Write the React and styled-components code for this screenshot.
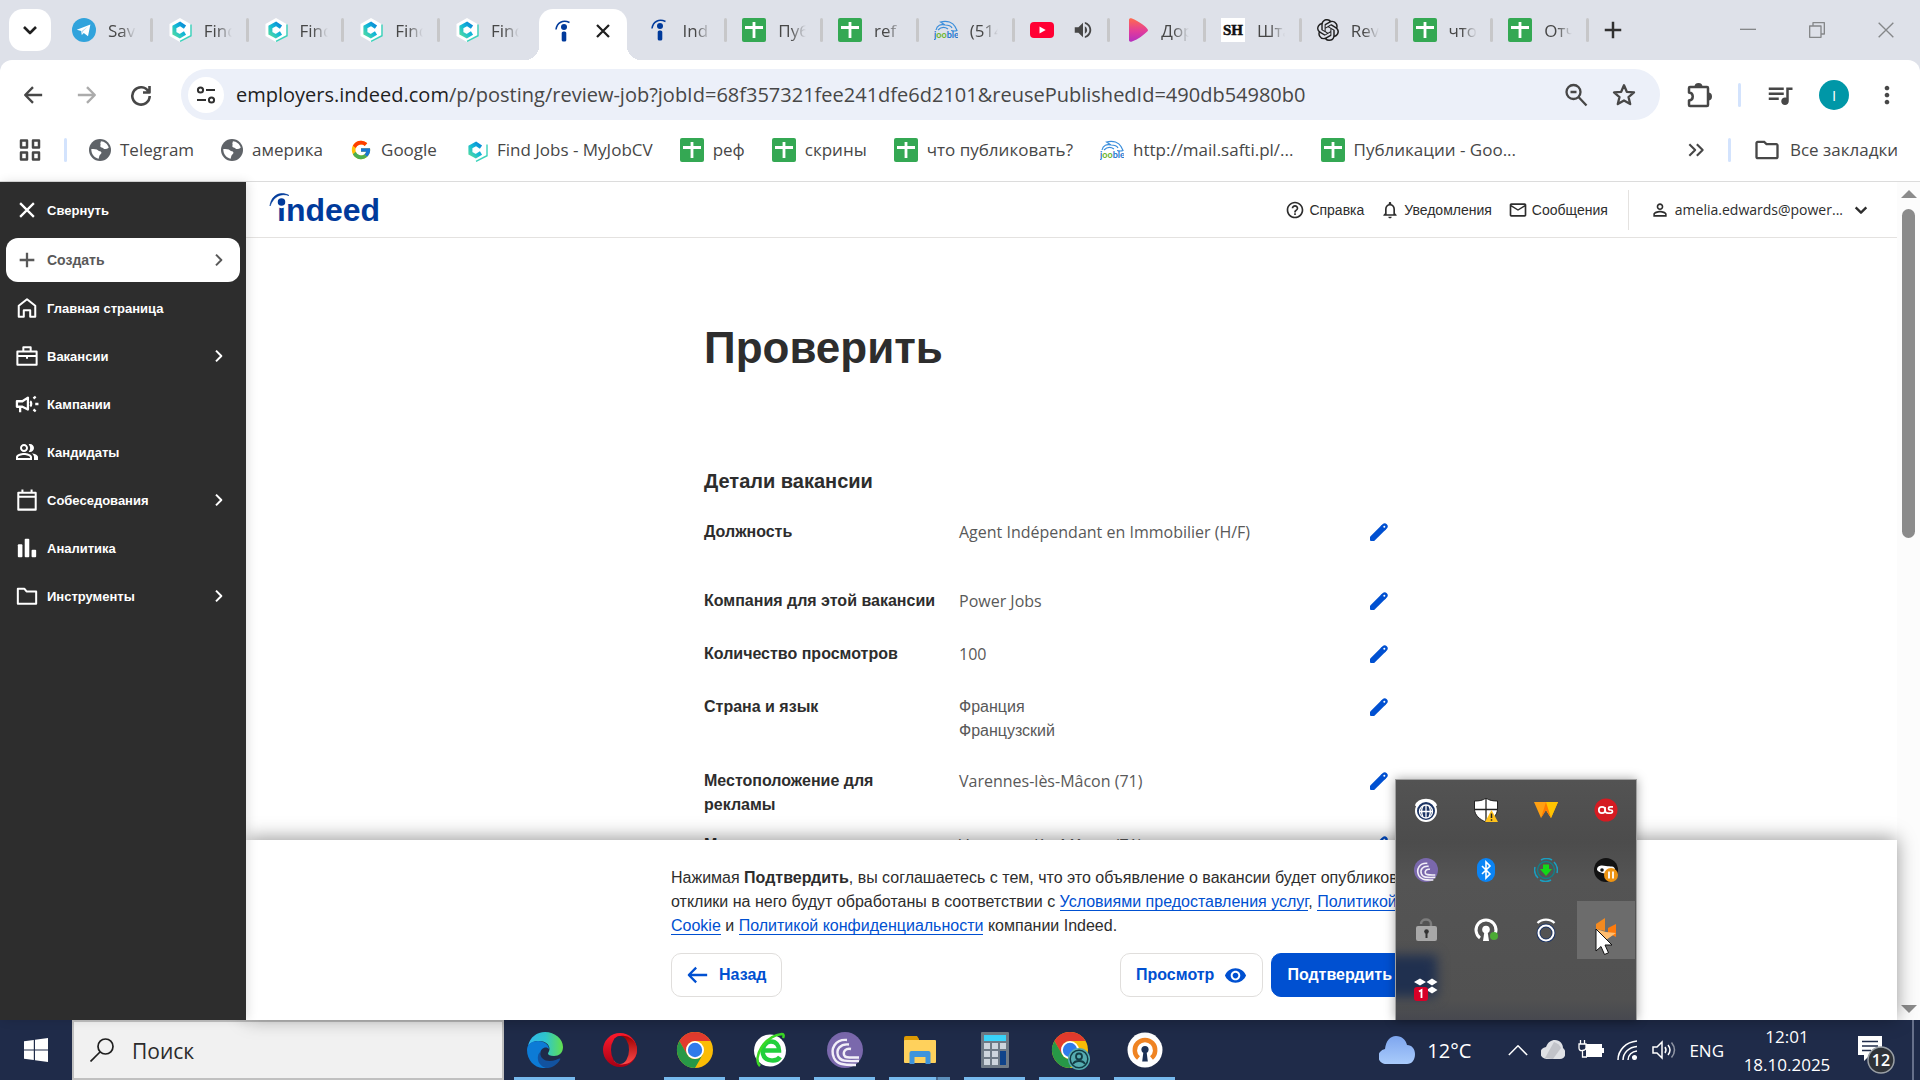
import React from 'react'
import styled, { createGlobalStyle, css } from 'styled-components'
import { FcGoogle } from 'react-icons/fc'
import { SiOpenai } from 'react-icons/si'
import {
  MdQueueMusic,
  MdMoreVert,
  MdVolumeUp,
  MdHelpOutline,
  MdOutlineNotifications,
  MdMailOutline,
  MdPersonOutline,
  MdOutlineFolder,
  MdOutlinePeopleAlt,
  MdVisibility,
} from 'react-icons/md'

const uiFont = '"Open Sans", "Noto Sans", sans-serif'
const pageFont = '"Liberation Sans", Arial, sans-serif'

const GlobalStyle = createGlobalStyle`
  * {
    box-sizing: border-box;
  }
  body {
    margin: 0;
    background: #ffffff;
    font-family: ${uiFont};
    color: #2d2d2d;
  }
  button {
    padding: 0;
    border: 0;
    background: none;
    color: inherit;
    font: inherit;
    cursor: pointer;
  }
  a {
    color: inherit;
    text-decoration: none;
  }
  svg {
    display: block;
    flex: none;
  }
`

const Desktop = styled.div`
  display: flex;
  flex-direction: column;
  height: 100vh;
  overflow: hidden;
`

/* ---------- browser: tabs ---------- */

const TabStrip = styled.div`
  display: flex;
  align-items: center;
  height: 60px;
  padding-left: 9px;
  background: #dee1e9;
`

const TabSearch = styled.button`
  display: flex;
  align-items: center;
  justify-content: center;
  width: 42px;
  height: 42px;
  margin-right: 5px;
  border-radius: 14px;
  background: #ffffff;
  color: #1f1f1f;
`

const Tabs = styled.div`
  display: grid;
  flex: 1;
  grid-auto-flow: column;
  grid-auto-columns: minmax(0, 1fr);
  height: 60px;
`

const TabButton = styled.button`
  position: relative;
  display: flex;
  align-items: center;
  gap: ${props => (props.$sound ? '18px' : '12px')};
  padding-left: 16px;
  color: #474747;
  font-size: 17px;
  text-align: left;

  ${props => props.$divided && css`
    &::after {
      content: '';
      position: absolute;
      right: -1px;
      width: 3px;
      height: 24px;
      border-radius: 2px;
      background: #c7c7c9;
    }
  `}

  ${props => props.$active && css`
    align-self: end;
    gap: 20px;
    height: 51px;
    margin: 0 4px;
    padding-bottom: 8px;
    padding-left: 12px;
    border-radius: 14px 14px 0 0;
    background: #ffffff;
    color: #1f1f1f;

    &::before,
    &::after {
      content: '';
      position: absolute;
      bottom: 0;
      width: 14px;
      height: 14px;
    }
    &::before {
      right: 100%;
      background: radial-gradient(circle at 0 0, transparent 14px, #ffffff 14px);
    }
    &::after {
      left: 100%;
      background: radial-gradient(circle at 100% 0, transparent 14px, #ffffff 14px);
    }
  `}
`

const TabTitle = styled.span`
  width: 28px;
  margin-top: 1px;
  overflow: hidden;
  line-height: 28px;
  white-space: nowrap;
  mask-image: linear-gradient(90deg, #000 45%, transparent 100%);
`

const TabTools = styled.div`
  display: flex;
  align-items: center;
  justify-content: space-between;
  width: 332px;
  padding: 0 26px 0 16px;
  color: #303030;
`

const WindowControls = styled.div`
  display: flex;
  gap: 53px;
  color: #858789;
`

const PlainButton = styled.button`
  display: flex;
  align-items: center;
  justify-content: center;
`

/* ---------- browser: toolbar ---------- */

const ToolbarShell = styled.div`
  background: #dee1e9;
`

const Toolbar = styled.div`
  display: flex;
  align-items: center;
  height: 69px;
  padding: 0 19px;
  border-radius: 12px 12px 0 0;
  background: #ffffff;
  color: #474747;
`

const NavButton = styled(PlainButton)`
  width: 28px;
  margin-right: 26px;
  opacity: ${props => (props.$faded ? 0.45 : 1)};
`

const Omnibox = styled.div`
  display: flex;
  flex: 1;
  align-items: center;
  height: 51px;
  margin-right: 26px;
  padding: 0 24px 0 7px;
  border-radius: 26px;
  background: #ecf0f9;
`

const SiteInfo = styled.button`
  display: flex;
  align-items: center;
  justify-content: center;
  width: 36px;
  height: 36px;
  border-radius: 50%;
  background: #ffffff;
`

const Address = styled.div`
  flex: 1;
  margin-left: 12px;
  overflow: hidden;
  white-space: nowrap;
  font-size: 20px;
  line-height: 32px;

  span {
    color: #1f1f1f;
  }
`

const OmniboxActions = styled.div`
  display: flex;
  gap: 24px;
`

const ToolbarActions = styled.div`
  display: flex;
  align-items: center;
  gap: 24px;
`

const Divider = styled.span`
  width: 3px;
  height: 24px;
  border-radius: 2px;
  background: #d3e3fd;
`

const Avatar = styled.span`
  display: flex;
  align-items: center;
  justify-content: center;
  width: 30px;
  height: 30px;
  border-radius: 50%;
  background: #0097a7;
  color: #ffffff;
  font-size: 15px;
`

/* ---------- browser: bookmarks ---------- */

const Bookmarks = styled.nav`
  display: flex;
  align-items: center;
  gap: 22px;
  height: 53px;
  padding: 0 22px 10px 18px;
  border-bottom: 1px solid #dcdcdc;
  background: #ffffff;
  color: #474747;
  font-size: 17px;
  white-space: nowrap;
`

const BookmarkList = styled.div`
  display: flex;
  flex: 1;
  gap: 27px;
`

const Bookmark = styled.a`
  display: flex;
  align-items: center;
  gap: 9px;
  line-height: 24px;
`

const BookmarkTail = styled.div`
  display: flex;
  align-items: center;
  gap: 22px;
`

/* ---------- page ---------- */

const Viewport = styled.div`
  position: relative;
  display: flex;
  flex: 1;
  min-height: 0;
  font-family: ${pageFont};
`

const Sidebar = styled.nav`
  z-index: 2;
  display: flex;
  flex: none;
  flex-direction: column;
  gap: 4px;
  width: 246px;
  padding: 6px;
  background: #2d2d2d;
  box-shadow: 2px 0 10px rgba(0, 0, 0, 0.12);
`

const SidebarItem = styled.a`
  display: flex;
  align-items: center;
  gap: 9px;
  height: 44px;
  padding: 0 14px 0 10px;
  border-radius: 12px;
  background: ${props => (props.$light ? '#ffffff' : 'transparent')};
  color: ${props => (props.$light ? '#595959' : '#ffffff')};
  font-size: ${props => (props.$light ? '14px' : '13px')};
  font-weight: bold;

  &:first-child {
    margin-bottom: 2px;
  }
`

const SidebarIcon = styled.span`
  display: flex;
  flex: none;
  justify-content: center;
  width: 22px;
`

const SidebarLabel = styled.span`
  flex: 1;
`

const Page = styled.div`
  display: flex;
  flex: 1;
  flex-direction: column;
  min-width: 0;
`

const PageHeader = styled.header`
  display: flex;
  flex: none;
  align-items: center;
  height: 56px;
  padding: 0 28px 0 23px;
  border-bottom: 1px solid #e4e2e0;
  font-size: 14px;
`

const LogoSlot = styled.div`
  flex: 1;
`

const Logo = styled.a`
  position: relative;
  display: inline-block;
  padding-left: 8px;
  color: #003a9b;
  font-size: 32px;
  font-weight: bold;
  line-height: 40px;

  svg {
    position: absolute;
    top: 2px;
    left: 0;
  }
`

const HeaderLink = styled.a`
  display: flex;
  align-items: center;
  gap: 4px;
  margin-left: 16px;
`

const Account = styled.button`
  display: flex;
  align-items: center;
  gap: 5px;
  height: 40px;
  margin-left: 20px;
  padding-left: 21px;
  border-left: 1px solid #e4e2e0;
  font-family: ${uiFont};
  font-size: 14px;

  svg:last-child {
    margin-left: 5px;
  }
`

const PageBody = styled.main`
  flex: 1;
  min-height: 0;
  padding: 82px 32px 0 0;
  overflow: hidden;
`

const Column = styled.div`
  max-width: ${props => props.$width}px;
  margin: 0 auto;
`

const Title = styled.h1`
  margin: 0 0 89px;
  font-size: 44px;
  line-height: 56px;
`

const Subtitle = styled.h2`
  margin: 0 0 23px;
  font-size: 20px;
  line-height: 32px;
`

const DetailRow = styled.section`
  display: grid;
  grid-template-columns: 239px 1fr 56px;
  column-gap: 16px;
  align-items: start;
  margin-bottom: ${props => props.$space}px;
  font-size: 16px;
  line-height: 24px;
`

const DetailLabel = styled.h3`
  margin: 0;
  font-size: 16px;
  font-weight: bold;
`

const DetailValue = styled.div`
  color: #595959;
  font-family: ${props => (props.$latin ? uiFont : pageFont)};
`

const EditButton = styled(PlainButton)`
  height: 24px;
  color: #0050d1;
`

const Footer = styled.footer`
  z-index: 1;
  flex: none;
  height: 180px;
  padding: 26px 32px 0 0;
  background: #ffffff;
  box-shadow: 0 -2px 18px rgba(0, 0, 0, 0.4);
  font-size: 16px;
  line-height: 24px;
`

const Terms = styled.p`
  margin: 0 -4px 15px 0;

  a {
    border-bottom: 1px solid #0050d1;
    color: #0050d1;
  }
`

const FooterActions = styled.div`
  display: flex;
  gap: 8px;
`

const ActionButton = styled.button`
  display: flex;
  align-items: center;
  gap: 10px;
  height: 44px;
  margin-right: ${props => (props.$first ? 'auto' : '0')};
  padding: 0 15px;
  border: 1px solid ${props => (props.$primary ? '#0050d1' : '#e0dedc')};
  border-radius: 10px;
  background: ${props => (props.$primary ? '#0050d1' : '#ffffff')};
  color: ${props => (props.$primary ? '#ffffff' : '#0050d1')};
  font-weight: bold;
`

const ScrollTrack = styled.div`
  display: flex;
  flex: none;
  flex-direction: column;
  align-items: center;
  width: 23px;
  padding: 8px 0 7px;
  background: #fcfcfc;
`

const ScrollThumb = styled.div`
  width: 13px;
  height: 329px;
  margin: 11px 0 auto;
  border-radius: 7px;
  background: #8b8b8b;
`

/* ---------- tray popup ---------- */

const TrayPopup = styled.div`
  position: absolute;
  right: 283px;
  bottom: 0;
  z-index: 3;
  display: grid;
  grid-template-columns: repeat(4, 60px);
  grid-auto-rows: 60px;
  width: 242px;
  height: 241px;
  overflow: hidden;
  border: 1px solid #a0a0a0;
  border-bottom: 0;
  background: linear-gradient(#535353, #4c4c4c 62px, #545454 100px, #515151 220px, #47484f);
  box-shadow: 0 0 10px rgba(0, 0, 0, 0.35);

  /* the blue button showing through the acrylic */
  &::before {
    content: '';
    position: absolute;
    top: 175px;
    left: -16px;
    width: 57px;
    height: 42px;
    background: #20304f;
    filter: blur(6px);
  }
`

const TrayCell = styled.button`
  position: relative;
  display: flex;
  align-items: center;
  justify-content: center;
  margin: 1px;
  background: ${props => (props.$hover ? '#6c6c6c' : 'transparent')};
`

const Cursor = styled.svg`
  position: absolute;
  top: 148px;
  left: 199px;
`

/* ---------- taskbar ---------- */

const Taskbar = styled.div`
  display: flex;
  flex: none;
  align-items: center;
  height: 60px;
  background: #1f2b49;
  color: #ffffff;
`

const StartButton = styled(PlainButton)`
  width: 72px;
  height: 60px;
`

const SearchBox = styled.label`
  display: flex;
  align-items: center;
  gap: 18px;
  width: 432px;
  height: 60px;
  padding-left: 16px;
  border: 2px solid #c0c0c0;
  background: #f1f1f1;
  color: #1f1f1f;

  input {
    flex: 1;
    min-width: 0;
    padding: 2px 0 0;
    border: 0;
    outline: 0;
    background: none;
    color: #2b2b2b;
    font: 21px ${uiFont};
  }
  input::placeholder {
    color: #2b2b2b;
    opacity: 1;
  }
`

const Apps = styled.div`
  display: flex;
  flex: 1;
  gap: 14px;
  margin-left: 10px;
`

const AppButton = styled(PlainButton)`
  width: 61px;
  height: 60px;
  background: bottom / 100% 3px no-repeat;

  ${props => props.$running && css`
    background-image: linear-gradient(#76b9ed, #76b9ed);
  `}
  ${props => props.$grouped && css`
    background-image: linear-gradient(90deg, #76b9ed 47px, #46688f 47px, #46688f 49px, #5c8fbb 49px);
  `}
`

const Tray = styled.div`
  display: flex;
  align-items: center;
  gap: 13px;
  padding-right: 6px;
  font-size: 17px;
`

const Weather = styled(PlainButton)`
  gap: 12px;
  margin-right: 24px;
  font-size: 20px;
`

const Clock = styled.time`
  width: 100px;
  margin-top: 2px;
  font-size: 17px;
  line-height: 28px;
  text-align: center;
`

const Notifications = styled(PlainButton)`
  height: 60px;
  padding-right: 14px;
  border-right: 2px solid #66708a;
`

/* ---------- icons ---------- */

const Stroke = ({ d, size = 24, width = 2, cap = 'butt' }) => (
  <svg width={size} height={size} viewBox="0 0 24 24" fill="none" stroke="currentColor" strokeWidth={width} strokeLinecap={cap} strokeLinejoin="round">
    <path d={d} />
  </svg>
)

const SheetIcon = () => (
  <svg width="24" height="24" viewBox="0 0 24 24">
    <rect width="24" height="24" rx="2" fill="#34a853" />
    <path d="M12 4v16M3 9.5h18" stroke="#fff" strokeWidth="2.8" fill="none" />
  </svg>
)

const TelegramIcon = () => (
  <svg width="24" height="24" viewBox="0 0 24 24">
    <circle cx="12" cy="12" r="12" fill="#31a3dc" />
    <path d="M4.8 11.8 18.4 6.5 16 18.2l-4.2-3.1-2 2-.6-4.1z" fill="#fff" />
    <path d="m9.6 13 6.2-4.4-5 5.2-.9 2.8z" fill="#b5d8ec" />
  </svg>
)

const GlobeIcon = () => (
  <svg width="22" height="22" viewBox="0 0 24 24">
    <circle cx="12" cy="12" r="12" fill="#5f6368" />
    <path d="M13 2.5c4 .3 7.5 3 8.5 7-2 1.5-4.5 2-6 .5-1-1-2.5-.5-3-1.5s.5-2 0-3 .5-2 .5-3z" fill="#fff" />
    <path d="M2.5 11c3 0 6 0 7.5 1.5 1 1 3 .5 3.5 2s-1.5 2.5-2 3.500-.5 2-1 3.500C6 20.500 2.500 17 2.500 11z" fill="#fff" />
  </svg>
)

const CvIcon = () => (
  <svg width="24" height="24" viewBox="0 0 24 24">
    <defs>
      <linearGradient id="cv" x1="1" y1="0" x2="0" y2="1">
        <stop offset="0" stopColor="#0a86d8" />
        <stop offset=".5" stopColor="#12b9d6" />
        <stop offset="1" stopColor="#4fd9a5" />
      </linearGradient>
    </defs>
    <path d="M12 0 22.5 6v12L12 24 1.5 18V6z" fill="#fff" />
    <path d="M17 9.2 12 5.9 6.4 8.9v6.4l5.4 2.9 5.2-3.2" fill="none" stroke="url(#cv)" strokeWidth="4" />
    <path d="M23 6.5v11.2L12 23.3" fill="none" stroke="#3ad2ba" strokeWidth="1.4" />
  </svg>
)

const IndeedIcon = () => (
  <svg width="24" height="24" viewBox="0 0 24 24" fill="#003a9b">
    <circle cx="13" cy="8" r="3" />
    <rect x="10.7" y="12.5" width="4.6" height="10" rx="1.6" />
    <path d="M5 10.5C6 3.5 12 .5 18.5 3.5" fill="none" stroke="#003a9b" strokeWidth="1.5" />
  </svg>
)

const JoobleIcon = () => (
  <svg width="24" height="24" viewBox="0 0 24 24">
    <path d="M2 12C3 7 7 6 11 7L6.5 4C13 2 19 4.5 21 8.5l2 4c-2 1-4 .5-6 0M11 7c3 0 6 1 7 3M4 12c3-3 7-3 10-1" fill="none" stroke="#3b8edb" strokeWidth="1.2" />
    <text x="0" y="20" fontSize="9" fontWeight="bold" fontFamily="Lato, sans-serif" fill="#1d76cf">j<tspan fill="#6cb52d">oo</tspan>ble</text>
  </svg>
)

const YoutubeIcon = () => (
  <svg width="24" height="24" viewBox="0 0 24 24">
    <rect y="4" width="24" height="16" rx="4" fill="#ff0033" />
    <path d="m9.5 8.6 6.2 3.4-6.2 3.4z" fill="#fff" />
  </svg>
)

const PlayIcon = () => (
  <svg width="24" height="24" viewBox="0 0 24 24">
    <defs>
      <linearGradient id="play" x1="0" y1="0" x2="0" y2="1">
        <stop offset="0" stopColor="#ff6a4e" />
        <stop offset=".55" stopColor="#e23c9a" />
        <stop offset="1" stopColor="#b52fc0" />
      </linearGradient>
    </defs>
    <path d="M4 2C4 .3 5.5 0 7 .6c6.5 2.6 12 6.6 15 9.8 1.3 1.3 1.3 2.3 0 3.4-3.5 3.3-8.5 7.5-15 9.7-2 .6-3 0-3-1.5z" fill="url(#play)" />
  </svg>
)

const ShIcon = () => (
  <svg width="24" height="24" viewBox="0 0 24 24">
    <rect width="24" height="24" fill="#fff" />
    <text x="12" y="17" fontSize="15" fontWeight="bold" fontFamily="Liberation Serif, serif" textAnchor="middle" fill="#111" stroke="#111" strokeWidth=".5">SH</text>
  </svg>
)

const PuzzleIcon = () => (
  <svg width="28" height="28" viewBox="0 0 28 28">
    <path d="M4 6h17q1 0 1 1v17q0 1-1 1H4q-1 0-1-1v-4.500c5-.5 5-7.500 0-8V7q0-1 1-1z" fill="none" stroke="currentColor" strokeWidth="2.5" strokeLinejoin="round" />
    <path d="M8.5 6a4 4 0 0 1 8 0zM22 11.5a4 4 0 0 1 0 8z" fill="currentColor" />
  </svg>
)

const PencilIcon = () => (
  <svg width="20" height="20" viewBox="0 0 20 20">
    <path d="M1 14.8 12.5 3.2l4.3 4.3L5.2 19H2q-1 0-1-1z" fill="currentColor" />
    <path d="m11.5 4.2 2-2q2.3-2 4.3 0t0 4.3l-2 2z" fill="currentColor" />
    <circle cx="15.3" cy="4.7" r="1" fill="#fff" />
  </svg>
)

const Chevron = () => <Stroke size={16} width={3} d="m9 4 8 8-8 8" />

const HomeIcon = () => <Stroke size={22} width={2.2} d="M3 9.5 12 2.5l9 7V21.5h-5.5v-7h-7v7H3z" />
const CaseIcon = () => <Stroke size={22} width={2.2} d="M1.5 7h21v14.5h-21zM8 7V2.5h8V7M1.5 12h21M12 12v3" />
const HornIcon = () => (
  <svg width="24" height="22" viewBox="0 0 26 24" fill="none" stroke="currentColor" strokeWidth="2.5" strokeLinejoin="round">
    <path d="M2 9h6l6-4v13l-6-3H2zM5.5 15v6M16.5 9c1.500 1 1.500 4.500 0 5.500M20 6l2.500-2M22 12h3.500M20 18l2.500 2" />
  </svg>
)
const CalendarIcon = () => <Stroke size={22} width={2.2} d="M2.5 4h19v18.5h-19zM2.5 8.5h19M7 .5V4M17 .5V4" />
const ChartIcon = () => (
  <svg width="22" height="22" viewBox="0 0 24 24" fill="currentColor">
    <rect x="2" y="8" width="5" height="14" rx="1" />
    <rect x="9.5" y="2" width="5" height="20" rx="1" />
    <rect x="17" y="14" width="5" height="8" rx="1" />
  </svg>
)

const ChromeIcon = ({ profile }) => (
  <svg width="40" height="40" viewBox="0 0 40 40">
    <circle cx="20" cy="20" r="18" fill="#fbbc05" />
    <path d="M4.4 11A18 18 0 0 1 35.6 11H20a9 9 0 0 0-7.8 4.5l-.2 9z" fill="#e33b2e" />
    <path d="M4.4 11A18 18 0 0 0 20 38l7.8-13.5A9 9 0 0 1 12.2 24.5z" fill="#279847" />
    <circle cx="20" cy="20" r="9" fill="#fff" />
    <circle cx="20" cy="20" r="7.2" fill="#2f7bea" />
    {profile && (
      <g>
        <circle cx="29" cy="29" r="11" fill="#55acb0" />
        <circle cx="29" cy="29" r="8.8" fill="none" stroke="#123c44" strokeWidth="1.5" />
        <circle cx="29" cy="26.5" r="3" fill="none" stroke="#123c44" strokeWidth="1.8" />
        <path d="M23 34c2-4 10-4 12 0" fill="none" stroke="#123c44" strokeWidth="1.8" />
      </g>
    )}
  </svg>
)

const EdgeIcon = () => (
  <svg width="36" height="36" viewBox="0 0 36 36">
    <defs>
      <linearGradient id="edge" x1="0" x2="1">
        <stop offset="0" stopColor="#31b9ee" />
        <stop offset=".5" stopColor="#2fc6cf" />
        <stop offset="1" stopColor="#62e04d" />
      </linearGradient>
    </defs>
    <path d="M1 14C3 5 10 0 18 0c10 0 18 7 18 15 0 6-4 9-9 9-4 0-6-1-6-2.5 0-1 1.5-2 1.5-4.5C22.5 12 18 9 12 9 7 9 3 11 1 14z" fill="url(#edge)" />
    <path d="M0 18c0-6 5-9 11-9 6.5 0 11 4 11 8-2-3-9-2-9 6 0 6 5 10 9 12-10 4-22-4-22-17z" fill="#0c7bd6" />
    <path d="M13.5 20c-1 5 3 9 9 9 5 0 8-2 10-2.5 1 0 1 .5.5 1.2C30 33 24 36.5 19 36c-6-2-9-7-8-12 .3-2 1.3-3.5 2.5-4z" fill="#12529f" />
  </svg>
)

const OperaIcon = () => (
  <svg width="36" height="36" viewBox="0 0 36 36">
    <defs>
      <linearGradient id="opera" x1="0" y1="0" x2="0" y2="1">
        <stop offset="0" stopColor="#ff1b2d" />
        <stop offset="1" stopColor="#a70014" />
      </linearGradient>
      <linearGradient id="operaSide" x1="0" y1="0" x2="0" y2="1">
        <stop offset="0" stopColor="#9c0000" />
        <stop offset="1" stopColor="#ff4b4b" />
      </linearGradient>
    </defs>
    <circle cx="18" cy="18" r="17" fill="url(#opera)" />
    <path d="M12 7c3-3 7-4 11-3 7 1 12 7 12 14s-5 13-12 14c-4 1-8 0-11-3z" fill="url(#operaSide)" />
    <ellipse cx="18" cy="18" rx="9" ry="14" fill="#1f2b49" />
  </svg>
)

const GreenBrowserIcon = () => (
  <svg width="36" height="36" viewBox="0 0 36 36">
    <circle cx="18" cy="18.5" r="16" fill="#fff" />
    <path d="M28 25c-3 5-15 5-17-3-2-8 4-12.500 8-12.500 5 0 8 4 8 9H12" fill="none" stroke="#22cf3c" strokeWidth="4.5" />
    <path d="M8 34C0 26 12 4 30 2c2 0 2 2 1 4" fill="none" stroke="#3bd925" strokeWidth="2.5" />
  </svg>
)

const TorrentIcon = ({ size = 36 }) => (
  <svg width={size} height={size} viewBox="0 0 36 36">
    <circle cx="18" cy="18" r="18" fill="#7a68ac" />
    <path d="M20 8C8 7 3 17 7 26c3 6 8 7 22 7M22 12.5c-9-1-13 5-11 11 2 6 8 6 21 5.500M24 17c-5-1-8 2-7 6 1 3 5 2.500 15 2.500" fill="none" stroke="#f2eff8" strokeWidth="2.4" />
  </svg>
)

const FolderIcon = () => (
  <svg width="34" height="32" viewBox="0 0 34 32">
    <path d="M1 4q0-2 2-2h11l2 3v5H1z" fill="#dd9a04" />
    <rect x="1" y="6" width="32" height="23" rx="1" fill="#ffd15c" />
    <path d="M6.5 30V19q0-2 2-2h17q2 0 2 2v11h-5v-7h-11v7z" fill="#3f94dc" />
  </svg>
)

const CalcIcon = () => (
  <svg width="28" height="36" viewBox="0 0 28 36">
    <rect width="28" height="36" rx="1" fill="#6f7a86" />
    <rect x="3" y="3" width="22" height="6" fill="#3ad4fb" />
    <path d="M3 11h6v6H3zM11 11h6v6h-6zM19 11h6v6h-6zM3 19h6v6H3zM11 19h6v6h-6zM3 27h6v6H3zM11 27h6v6h-6z" fill="#ced5dd" />
    <rect x="19" y="19" width="6" height="14" fill="#10438a" />
  </svg>
)

const VpnIcon = () => (
  <svg width="36" height="36" viewBox="0 0 36 36">
    <circle cx="18" cy="18" r="17.5" fill="#fff" />
    <path d="M11.5 26A10.2 10.2 0 1 1 24.5 26" fill="none" stroke="#ef8322" strokeWidth="4.5" />
    <circle cx="18" cy="17.5" r="3.6" fill="#1c3156" />
    <path d="M16.5 19h3l1.3 10.5h-5.600z" fill="#1c3156" />
  </svg>
)

const GlobeTray = () => (
  <svg width="24" height="24" viewBox="0 0 24 24" fill="none" stroke="#fff" strokeWidth="1.3">
    <circle cx="12" cy="13" r="10" fill="#1d3565" strokeWidth="2" />
    <path d="M2 8C5 0 19 0 22 8" strokeWidth="2.5" />
    <circle cx="12" cy="13.5" r="6.5" />
    <path d="M12 7v13M5.5 13.5h13M9 8c-2 4-2 7 0 11M15 8c2 4 2 7 0 11" />
  </svg>
)

const ShieldTray = () => (
  <svg width="24" height="24" viewBox="0 0 24 24">
    <path d="M12 0c3 2.5 7 3 11.5 3v8c0 6-5 10.5-11.5 13C5.5 21.5.5 17 .5 11V3C5 3 9 2.5 12 0z" fill="#fff" stroke="#222" />
    <path d="M12 0v24M1 11.5h22" stroke="#222" strokeWidth="1.3" />
    <path d="m17.5 12 6.5 12H11z" fill="#ffc21a" />
    <path d="M17.5 15.5v4.5M17.5 21.3v1.5" stroke="#222" strokeWidth="1.5" />
  </svg>
)

const FoxTray = () => (
  <svg width="24" height="24" viewBox="0 0 24 24">
    <path d="M0 4h24l-7 16-5-8-5 8z" fill="#ffa012" />
    <path d="M12 4h12l-7 16-5-8z" fill="#ffc400" />
    <path d="m12 4 5 16-5-8-5 8z" fill="#ff7900" />
  </svg>
)

const LastTray = () => (
  <svg width="24" height="24" viewBox="0 0 24 24">
    <circle cx="12" cy="12" r="11.5" fill="#d51b22" />
    <circle cx="8" cy="12" r="3.2" fill="none" stroke="#fff" strokeWidth="1.7" />
    <path d="M11 9v3c0 2 1 3.2 3 3.2h2.5c2.6 0 2.6-3.2 0-3.2s-2.6-3.2 0-3.2H19" fill="none" stroke="#fff" strokeWidth="1.7" />
  </svg>
)

const BluetoothTray = () => (
  <svg width="24" height="24" viewBox="0 0 24 24">
    <rect x="3" width="18" height="24" rx="9" fill="#0a84f5" />
    <path d="m8 8 8 8-4 4V4l4 4-8 8" fill="none" stroke="#fff" strokeWidth="1.6" />
  </svg>
)

const DownloadTray = () => (
  <svg width="24" height="24" viewBox="0 0 24 24" fill="none" stroke="#1a9ec0" strokeWidth="1.5">
    <path d="M4 20A11.5 11.5 0 0 1 1 9M20 4a11.5 11.5 0 0 1 3 11M7 2a11 11 0 0 1 11 0M17 22a11 11 0 0 1-11 0" />
    <circle cx="12" cy="12" r="8.5" stroke="#157d85" />
    <path d="M9 6.5h6V11h3l-6 7-6-7h3z" fill="#12d916" stroke="none" />
  </svg>
)

const NinjaTray = () => (
  <svg width="24" height="24" viewBox="0 0 24 24">
    <circle cx="12" cy="12" r="12" fill="#121212" />
    <path d="M3 12c0-5 5-5 9-4s9-1 9 4-14 5-18 0z" fill="#fff" />
    <circle cx="8" cy="12" r="1.8" fill="#121212" />
    <circle cx="17" cy="17" r="7" fill="#ee9412" />
    <path d="M15 13.5v7M19 13.5v7" stroke="#fff" strokeWidth="1.8" />
  </svg>
)

const LockTray = () => (
  <svg width="24" height="24" viewBox="0 0 24 24">
    <path d="M7 6c0-6 10-6 10 0v6" fill="none" stroke="#7d7d7d" strokeWidth="2.5" />
    <rect x="2" y="8" width="21" height="15" rx="2" fill="#a8a8a8" />
    <circle cx="12.5" cy="13.5" r="2.3" fill="#333" />
    <path d="M12.5 14v6" stroke="#333" strokeWidth="2" />
  </svg>
)

const VpnTray = () => (
  <svg width="24" height="24" viewBox="0 0 24 24">
    <path d="M6 20A10 10 0 1 1 18 20" fill="none" stroke="#fff" strokeWidth="3" />
    <circle cx="12" cy="11.5" r="3.8" fill="#fff" />
    <path d="M10.5 13h3l1.5 10H9z" fill="#fff" />
    <circle cx="20" cy="18" r="4" fill="#4cab35" />
  </svg>
)

const CircleTray = () => (
  <svg width="24" height="24" viewBox="0 0 24 24" fill="none">
    <circle cx="12" cy="15" r="7.5" stroke="#1d3565" strokeWidth="4" />
    <circle cx="12" cy="15" r="7.5" stroke="#fff" strokeWidth="2" />
    <path d="M3.5 5C8 .5 16 .5 20.5 5" stroke="#fff" strokeWidth="2.2" />
  </svg>
)

const OrangeTray = () => (
  <svg width="24" height="24" viewBox="0 0 24 24">
    <path d="M2 6 11 0v13l-9-2z" fill="#f58a1f" />
    <path d="m14 10 8-4v13l-8-4z" fill="#ff7b0c" />
    <path d="M2 11 12 14l10 1-10 7z" fill="#ffbd70" />
  </svg>
)

const DropboxTray = () => (
  <svg width="24" height="24" viewBox="0 0 24 24">
    <path d="m0 4 6-3.5L12 4 6 7.5zM12.5 4l5.5-3.5L23.5 4 18 7.5zM12.5 12 18 8.500l5.500 3.500-5.500 3.500z" fill="#fff" />
    <rect y="9" width="14" height="14" rx="3" fill="#d80027" />
    <path d="m5 13.5 2.5-1.5v8" stroke="#fff" strokeWidth="1.8" fill="none" />
  </svg>
)

const ScrollArrow = ({ down }) => (
  <svg width="16" height="8" viewBox="0 0 16 8">
    <path d={down ? 'M0 0h16L8 8z' : 'M0 8h16L8 0z'} fill="#8b8b8b" />
  </svg>
)

/* ---------- data ---------- */

const tabs = [
  { icon: <TelegramIcon />, title: 'Save', divided: true },
  { icon: <CvIcon />, title: 'Find', divided: true },
  { icon: <CvIcon />, title: 'Find', divided: true },
  { icon: <CvIcon />, title: 'Find', divided: true },
  { icon: <CvIcon />, title: 'Find' },
  { icon: <IndeedIcon />, active: true },
  { icon: <IndeedIcon />, title: 'Ind', divided: true },
  { icon: <SheetIcon />, title: 'Пуб', divided: true },
  { icon: <SheetIcon />, title: 'ref', divided: true },
  { icon: <JoobleIcon />, title: '(514', divided: true },
  { icon: <YoutubeIcon />, sound: true, divided: true },
  { icon: <PlayIcon />, title: 'Дор', divided: true },
  { icon: <ShIcon />, title: 'Шта', divided: true },
  { icon: <SiOpenai size={22} color="#1f1f1f" />, title: 'Rev', divided: true },
  { icon: <SheetIcon />, title: 'что', divided: true },
  { icon: <SheetIcon />, title: 'Отч', divided: true },
]

const bookmarks = [
  { icon: <GlobeIcon />, title: 'Telegram' },
  { icon: <GlobeIcon />, title: 'америка' },
  { icon: <FcGoogle size={22} />, title: 'Google' },
  { icon: <CvIcon />, title: 'Find Jobs - MyJobCV' },
  { icon: <SheetIcon />, title: 'реф' },
  { icon: <SheetIcon />, title: 'скрины' },
  { icon: <SheetIcon />, title: 'что публиковать?' },
  { icon: <JoobleIcon />, title: 'http://mail.safti.pl/...' },
  { icon: <SheetIcon />, title: 'Публикации - Goo...' },
]

const menu = [
  { icon: <Stroke size={22} width={2.5} d="m4.5 4.5 15 15M19.5 4.5l-15 15" />, title: 'Свернуть' },
  { icon: <Stroke size={22} width={2.5} d="M12 4v16M4 12h16" />, title: 'Создать', light: true, more: true },
  { icon: <HomeIcon />, title: 'Главная страница' },
  { icon: <CaseIcon />, title: 'Вакансии', more: true },
  { icon: <HornIcon />, title: 'Кампании' },
  { icon: <MdOutlinePeopleAlt size={24} />, title: 'Кандидаты' },
  { icon: <CalendarIcon />, title: 'Собеседования', more: true },
  { icon: <ChartIcon />, title: 'Аналитика' },
  { icon: <Stroke size={22} width={2.2} d="M2 4h7l2.5 3H22v13.5H2z" />, title: 'Инструменты', more: true },
]

const details = [
  { label: 'Должность', lines: ['Agent Indépendant en Immobilier (H/F)'], latin: true, space: 45 },
  { label: 'Компания для этой вакансии', lines: ['Power Jobs'], latin: true, space: 29 },
  { label: 'Количество просмотров', lines: ['100'], latin: true, space: 29 },
  { label: 'Страна и язык', lines: ['Франция', 'Французский'], space: 26 },
  { label: 'Местоположение для рекламы', lines: ['Varennes-lès-Mâcon (71)'], latin: true, space: 16 },
  { label: 'Местоположение', lines: ['Varennes-lès-Mâcon (71)'], latin: true, space: 16 },
]

const trayIcons = [
  { name: 'Globe', icon: <GlobeTray /> },
  { name: 'Security', icon: <ShieldTray /> },
  { name: 'Fox', icon: <FoxTray /> },
  { name: 'Scrobbler', icon: <LastTray /> },
  { name: 'Torrent', icon: <TorrentIcon size={24} /> },
  { name: 'Bluetooth', icon: <BluetoothTray /> },
  { name: 'Download', icon: <DownloadTray /> },
  { name: 'Ninja', icon: <NinjaTray /> },
  { name: 'Lock', icon: <LockTray /> },
  { name: 'VPN', icon: <VpnTray /> },
  { name: 'Circle', icon: <CircleTray /> },
  { name: 'Orange', icon: <OrangeTray />, hover: true },
  { name: 'Dropbox', icon: <DropboxTray /> },
]

const apps = [
  { name: 'Edge', icon: <EdgeIcon />, running: true },
  { name: 'Opera', icon: <OperaIcon /> },
  { name: 'Chrome', icon: <ChromeIcon />, running: true },
  { name: 'Browser', icon: <GreenBrowserIcon />, running: true },
  { name: 'Torrent', icon: <TorrentIcon />, running: true },
  { name: 'Explorer', icon: <FolderIcon />, running: true, grouped: true },
  { name: 'Calculator', icon: <CalcIcon />, running: true },
  { name: 'Chrome profile', icon: <ChromeIcon profile />, running: true },
  { name: 'VPN', icon: <VpnIcon />, running: true },
]

/* ---------- parts ---------- */

const Tab = ({ icon, title, active, sound, divided }) => (
  <TabButton $active={active} $divided={divided} $sound={sound}>
    {icon}
    {title && <TabTitle>{title}</TabTitle>}
    {active && <Stroke size={16} width={3.4} d="m3 3 18 18M21 3 3 21" />}
    {sound && <MdVolumeUp size={22} />}
  </TabButton>
)

const Browser = () => (
  <header>
    <TabStrip>
      <TabSearch aria-label="Поиск вкладок"><Stroke size={18} width={3.5} d="m4 8 8 8 8-8" /></TabSearch>
      <Tabs>
        {tabs.map((tab, i) => <Tab key={i} {...tab} />)}
      </Tabs>
      <TabTools>
        <PlainButton aria-label="Новая вкладка"><Stroke size={18} width={3.3} d="M12 1v22M1 12h22" /></PlainButton>
        <WindowControls>
          <PlainButton aria-label="Свернуть окно"><Stroke size={16} d="M0 11h24" /></PlainButton>
          <PlainButton aria-label="Окно"><Stroke size={16} d="M1 6h17v17H1zM6 6V1h17v17h-5" /></PlainButton>
          <PlainButton aria-label="Закрыть"><Stroke size={16} d="m1 1 22 22M23 1 1 23" /></PlainButton>
        </WindowControls>
      </TabTools>
    </TabStrip>
    <ToolbarShell>
      <Toolbar>
        <NavButton aria-label="Назад"><Stroke size={22} width={2.6} d="M22 12H4M12 3.5 3.5 12l8.5 8.5" /></NavButton>
        <NavButton aria-label="Вперёд" $faded><Stroke size={22} width={2.6} d="M2 12H20M12 3.5l8.5 8.5-8.5 8.5" /></NavButton>
        <NavButton aria-label="Обновить"><Stroke width={2.6} d="M19.5 8.5A8.7 8.7 0 1 0 20.7 13M20.5 3v6.5H14" /></NavButton>
        <Omnibox>
          <SiteInfo aria-label="Сведения о сайте">
            <svg width="20" height="20" viewBox="0 0 20 20" fill="none" stroke="#303030" strokeWidth="2">
              <circle cx="4.5" cy="5" r="2.6" />
              <circle cx="15.5" cy="15" r="2.6" />
              <path d="M10 5h9M1 15h9" />
            </svg>
          </SiteInfo>
          <Address><span>employers.indeed.com</span>/p/posting/review-job?jobId=68f357321fee241dfe6d2101&reusePublishedId=490db54980b0</Address>
          <OmniboxActions>
            <PlainButton aria-label="Масштаб">
              <svg width="24" height="24" viewBox="0 0 24 24" fill="none" stroke="currentColor" strokeWidth="2.3">
                <circle cx="9.5" cy="9" r="7" />
                <path d="m14.5 14 8 8.500M6.500 9h6" />
              </svg>
            </PlainButton>
            <PlainButton aria-label="В закладки">
              <Stroke size={24} width={2.3} d="m12 2.2 2.8 6.6 7.2.6-5.5 4.7 1.7 7L12 17.4l-6.2 3.700 1.700-7L2 9.400l7.200-.6z" />
            </PlainButton>
          </OmniboxActions>
        </Omnibox>
        <ToolbarActions>
          <PlainButton aria-label="Расширения"><PuzzleIcon /></PlainButton>
          <Divider />
          <PlainButton aria-label="Медиа"><MdQueueMusic size={30} /></PlainButton>
          <Avatar>I</Avatar>
          <PlainButton aria-label="Меню"><MdMoreVert size={28} /></PlainButton>
        </ToolbarActions>
      </Toolbar>
    </ToolbarShell>
    <Bookmarks>
      <Stroke size={24} width={2.5} d="M3 2.5h6v7H3zM15 2.5h6v7h-6zM3 14.5h6v7H3zM15 14.5h6v7h-6z" />
      <Divider />
      <BookmarkList>
        {bookmarks.map(item => (
          <Bookmark href="#" key={item.title}>{item.icon}{item.title}</Bookmark>
        ))}
      </BookmarkList>
      <BookmarkTail>
        <Stroke size={20} width={2.5} d="m4 5 7 7-7 7M13 5l7 7-7 7" />
        <Divider />
        <Bookmark href="#"><MdOutlineFolder size={28} />Все закладки</Bookmark>
      </BookmarkTail>
    </Bookmarks>
  </header>
)

const SideMenu = () => (
  <Sidebar>
    {menu.map(item => (
      <SidebarItem href="#" key={item.title} $light={item.light}>
        <SidebarIcon>{item.icon}</SidebarIcon>
        <SidebarLabel>{item.title}</SidebarLabel>
        {item.more && <Chevron />}
      </SidebarItem>
    ))}
  </Sidebar>
)

const Review = () => (
  <PageBody>
    <Column $width={703}>
      <Title>Проверить</Title>
      <Subtitle>Детали вакансии</Subtitle>
      {details.map(row => (
        <DetailRow key={row.label} $space={row.space}>
          <DetailLabel>{row.label}</DetailLabel>
          <DetailValue $latin={row.latin}>
            {row.lines.map(line => <div key={line}>{line}</div>)}
          </DetailValue>
          <EditButton aria-label={`Изменить: ${row.label}`}><PencilIcon /></EditButton>
        </DetailRow>
      ))}
    </Column>
  </PageBody>
)

const ConfirmBar = () => (
  <Footer>
    <Column $width={769}>
      <Terms>
        Нажимая <b>Подтвердить</b>, вы соглашаетесь с тем, что это объявление о вакансии будет опубликовано и
        отклики на него будут обработаны в соответствии с <a href="#">Условиями предоставления услуг</a>, <a href="#">Политикой
        Cookie</a> и <a href="#">Политикой конфиденциальности</a> компании Indeed.
      </Terms>
      <FooterActions>
        <ActionButton $first><Stroke size={22} width={2.5} d="M22 12H3M10 4l-8 8 8 8" />Назад</ActionButton>
        <ActionButton>Просмотр<MdVisibility size={23} /></ActionButton>
        <ActionButton $primary>Подтвердить<Stroke size={22} width={2.5} d="M2 12h19M14 4l8 8-8 8" /></ActionButton>
      </FooterActions>
    </Column>
  </Footer>
)

const HiddenIcons = () => (
  <TrayPopup>
    {trayIcons.map(item => (
      <TrayCell key={item.name} aria-label={item.name} $hover={item.hover}>{item.icon}</TrayCell>
    ))}
    <Cursor width="20" height="28" viewBox="0 0 20 28">
      <path d="M1 1v22l5-4.5 3.5 8 4-1.7L10 17h7z" fill="#fff" stroke="#111" />
    </Cursor>
  </TrayPopup>
)

const SystemBar = () => (
  <Taskbar>
    <StartButton aria-label="Пуск">
      <svg width="24" height="24" viewBox="0 0 24 24" fill="#fff">
        <path d="M0 3.3 9.8 2v9.5H0zM11 1.8 24 0v11.5H11zM0 12.6h9.8V22L0 20.7zM11 12.6h13V24l-13-1.8z" />
      </svg>
    </StartButton>
    <SearchBox>
      <svg width="24" height="24" viewBox="0 0 24 24" fill="none" stroke="currentColor" strokeWidth="1.7">
        <circle cx="15.5" cy="8.5" r="7.5" />
        <path d="m10 14-9.5 9.5" />
      </svg>
      <input aria-label="Поиск" placeholder="Поиск" />
    </SearchBox>
    <Apps>
      {apps.map(app => (
        <AppButton key={app.name} aria-label={app.name} $running={app.running} $grouped={app.grouped}>{app.icon}</AppButton>
      ))}
    </Apps>
    <Tray>
      <Weather>
        <svg width="36" height="28" viewBox="0 0 36 28">
          <defs>
            <linearGradient id="cloud" x1="0" y1="0" x2="0" y2="1">
              <stop offset="0" stopColor="#7ea6ef" />
              <stop offset="1" stopColor="#a9cbfb" />
            </linearGradient>
          </defs>
          <path d="M8 28a7.500 7.500 0 0 1-2-15C7 5 11 0 17 0s10 4 11 9c5 0 8 4 8 9 0 6-3 10-8 10z" fill="url(#cloud)" />
        </svg>
        12°C
      </Weather>
      <Stroke size={20} width={1.8} d="m1 18 11-11 11 11" />
      <svg width="24" height="20" viewBox="0 0 24 20">
        <path d="M6 19a6 6 0 0 1-1-12C7 2 10 0 14 0c5 0 8 4 8 8 4 3 3 11-3 11z" fill="#dfe1e5" />
        <path d="M4 18 13 2c3 1 6 3 7 6l-8 11z" fill="#a3a6ad" opacity=".5" />
      </svg>
      <svg width="26" height="20" viewBox="0 0 26 20" fill="none" stroke="#fff">
        <path d="M2.5 0v4M6.5 0v4M1 4h7v4q0 2-3.5 2.5T1 8zM4.5 10v7H9" strokeWidth="1.3" />
        <rect x="8.5" y="4.5" width="15" height="12" fill="#fff" />
        <path d="M25 8v5" strokeWidth="2" />
      </svg>
      <svg width="22" height="20" viewBox="0 0 22 20" fill="none" stroke="#fff" strokeWidth="1.5">
        <path d="M1 20C1 10 9 2 20 1M6 20C6 13 12 7 20 6.5M11 20c0-5 4-8.5 9-9" />
        <circle cx="17.5" cy="17.5" r="1.8" fill="#fff" />
      </svg>
      <svg width="24" height="20" viewBox="0 0 24 20" fill="none" stroke="#fff" strokeWidth="1.5">
        <path d="M1 7h4l5-5v16l-5-5H1zM13 7q2 3 0 6M16 5q4 5 0 10" />
        <path d="M19.5 2.5q6 7.5 0 15" opacity=".5" />
      </svg>
      <span>ENG</span>
      <Clock>12:01<br />18.10.2025</Clock>
      <Notifications aria-label="Уведомления: 12">
        <svg width="48" height="48" viewBox="0 0 48 48">
          <path d="M8 10h24v19H20l-6 6v-6H8z" fill="#fff" />
          <path d="M12 15.5h16M12 20h16M12 24.5h9" stroke="#1f2b49" strokeWidth="1.5" />
          <circle cx="31" cy="34" r="13" fill="#2f3338" stroke="#9aa0a6" strokeWidth="1.5" />
          <text x="31" y="39.5" fontSize="16" fontWeight="600" fontFamily="Open Sans, sans-serif" textAnchor="middle" fill="#fff">12</text>
        </svg>
      </Notifications>
    </Tray>
  </Taskbar>
)

function App() {
  return (
    <Desktop>
      <GlobalStyle />
      <Browser />
      <Viewport>
        <SideMenu />
        <Page>
          <PageHeader>
            <LogoSlot>
              <Logo href="#">
                indeed
                <svg width="24" height="20" viewBox="0 0 24 20">
                  <circle cx="12.5" cy="10" r="5" fill="#003a9b" stroke="#fff" strokeWidth="2.5" />
                  <path d="M1 14C2 3.5 11-1.5 20 3.5 12 1 5 4 1 14z" fill="#003a9b" stroke="#003a9b" strokeWidth=".6" />
                </svg>
              </Logo>
            </LogoSlot>
            <HeaderLink href="#"><MdHelpOutline size={20} />Справка</HeaderLink>
            <HeaderLink href="#"><MdOutlineNotifications size={20} />Уведомления</HeaderLink>
            <HeaderLink href="#"><MdMailOutline size={20} />Сообщения</HeaderLink>
            <Account>
              <MdPersonOutline size={20} />
              amelia.edwards@power...
              <Stroke size={16} width={3.5} d="m4 8 8 8 8-8" />
            </Account>
          </PageHeader>
          <Review />
          <ConfirmBar />
        </Page>
        <ScrollTrack>
          <ScrollArrow />
          <ScrollThumb />
          <ScrollArrow down />
        </ScrollTrack>
        <HiddenIcons />
      </Viewport>
      <SystemBar />
    </Desktop>
  )
}

export default App
